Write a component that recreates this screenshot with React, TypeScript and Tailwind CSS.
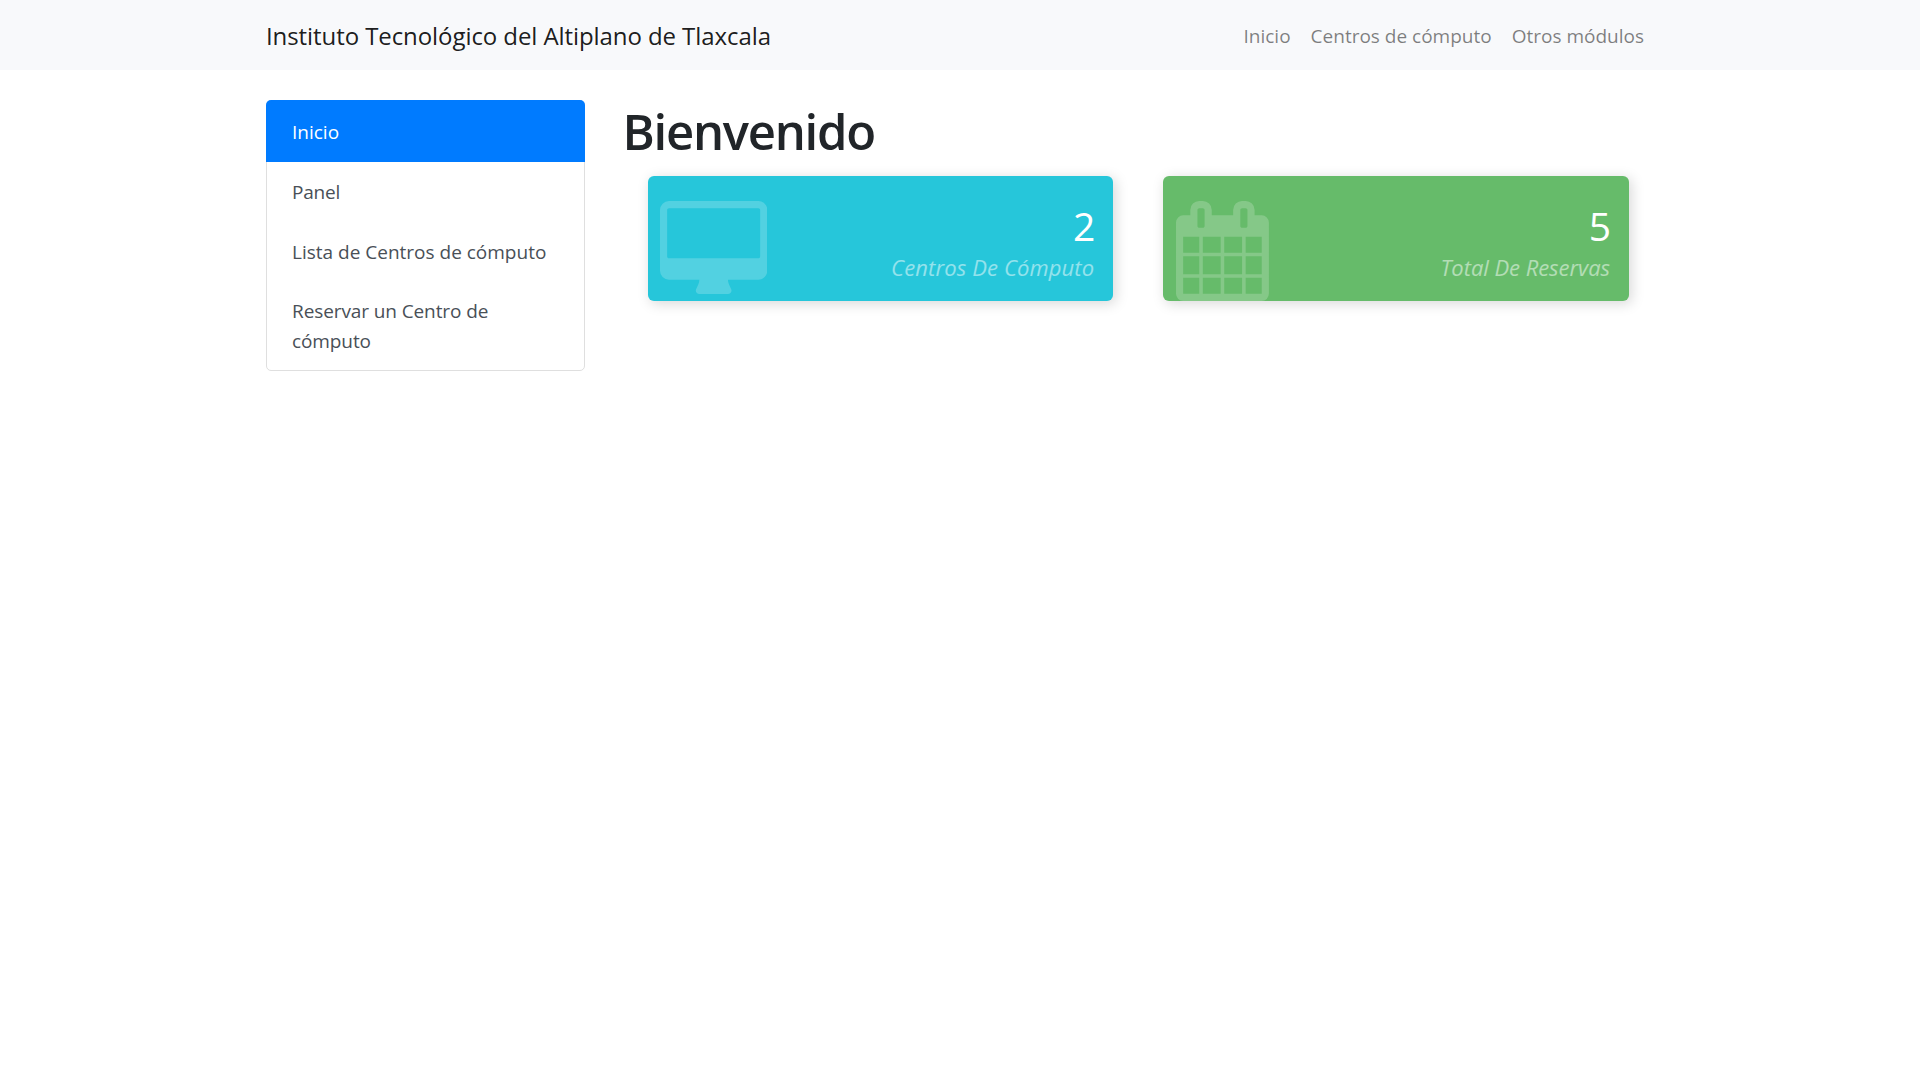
import React from "react";

const navLinks = ["Inicio", "Centros de cómputo", "Otros módulos"];

function DesktopIcon() {
  return (
    <svg viewBox="-64 0 1920 1664" className="block h-[93px] w-[107.3px] fill-white opacity-20">
      <path d="M1728 992v-832q0-13-9.5-22.5t-22.5-9.5h-1600q-13 0-22.5 9.5t-9.5 22.5v832q0 13 9.5 22.5t22.5 9.5h1600q13 0 22.5-9.5t9.5-22.5zm128-832v1088q0 66-47 113t-113 47h-544q0 37 16 77.5t32 71 16 43.5q0 26-19 45t-45 19h-512q-26 0-45-19t-19-45q0-14 16-44t32-70 16-78h-544q-66 0-113-47t-47-113v-1088q0-66 47-113t113-47h1600q66 0 113 47t47 113z" />
    </svg>
  );
}

function CalendarIcon() {
  return (
    <svg viewBox="64 0 1664 1792" className="block h-[100px] w-[92.9px] fill-white opacity-20">
      <path d="M192 1664h288v-288h-288v288zm352 0h320v-288h-320v288zm-352-352h288v-320h-288v320zm352 0h320v-320h-320v320zm-352-384h288v-288h-288v288zm736 736h320v-288h-320v288zm-384-736h320v-288h-320v288zm768 736h288v-288h-288v288zm-384-352h320v-320h-320v320zm-352-864v-288q0-13-9.5-22.5t-22.5-9.5h-64q-13 0-22.5 9.5t-9.5 22.5v288q0 13 9.5 22.5t22.5 9.5h64q13 0 22.5-9.5t9.5-22.5zm736 864h288v-320h-288v320zm-384-384h320v-288h-320v288zm384 0h288v-288h-288v288zm32-480v-288q0-13-9.5-22.5t-22.5-9.5h-64q-13 0-22.5 9.5t-9.5 22.5v288q0 13 9.5 22.5t22.5 9.5h64q13 0 22.5-9.5t9.5-22.5zm384-64v1280q0 52-38 90t-90 38h-1408q-52 0-90-38t-38-90v-1280q0-52 38-90t90-38h128v-96q0-66 47-113t113-47h64q66 0 113 47t47 113v96h384v-96q0-66 47-113t113-47h64q66 0 113 47t47 113v96h128q52 0 90 38t38 90z" />
    </svg>
  );
}

type CounterProps = {
  color: string;
  icon: React.ReactNode;
  count: number;
  label: string;
  labelClass: string;
};

function Counter({ color, icon, count, label, labelClass }: CounterProps) {
  return (
    <div
      className={`flex h-[125px] flex-1 justify-between rounded-[6px] pt-[25px] pl-[12.5px] text-white shadow-[2.5px_2.5px_12.5px_#dadada] ${color}`}
    >
      {icon}
      <div className="flex flex-col items-end pr-[19px] whitespace-nowrap">
        <span className="mt-[5px] text-[39px] leading-[40px] tracking-[-1px]">{count}</span>
        <span className={`mt-px text-[22px] leading-[40px] italic opacity-50 ${labelClass}`}>{label}</span>
      </div>
    </div>
  );
}

export default function App() {
  return (
    <div className="min-h-screen bg-white font-['Open_Sans',sans-serif] text-[19px] leading-[30px] text-[#212529]">
      <nav className="h-[70px] bg-[#f8f9fb]">
        <div className="mx-auto flex h-[72px] w-[1388px] items-center justify-between whitespace-nowrap">
          <a className="text-[24px] tracking-[-0.08px] text-black/90">
            Instituto Tecnológico del Altiplano de Tlaxcala
          </a>
          <div className="flex gap-5 pr-[10px] text-black/50">
            {navLinks.map((label) => (
              <a key={label}>{label}</a>
            ))}
          </div>
        </div>
      </nav>

      <div className="mx-auto flex w-[1388px] items-start pt-[30px]">
        <aside className="w-[319px] shrink-0 rounded-[5px] border border-[#dfdfdf] text-[#495057]">
          <a className="-mx-px -mt-px block h-[62px] rounded-t-[5px] bg-[#007bff] px-[26px] pt-[17px] text-white">
            Inicio
          </a>
          <a className="block h-[60px] px-[25px] pt-[15px] tracking-[-0.2px]">Panel</a>
          <a className="block h-[60px] px-[25px] pt-[15px] whitespace-nowrap">Lista de Centros de cómputo</a>
          <a className="block h-[88px] px-[25px] pt-[14px] tracking-[-0.1px] whitespace-nowrap">
            Reservar un Centro de
            <br />
            cómputo
          </a>
        </aside>

        <main className="flex-1 pl-[37px]">
          <h1 className="h-[76px] pt-px pl-[0.5px] text-[49px] leading-[60px] font-semibold tracking-[-1.25px]">
            Bienvenido
          </h1>
          <div className="flex gap-[50px] pr-[25px] pl-[25.5px]">
            <Counter
              color="bg-[#26c6da]"
              icon={<DesktopIcon />}
              count={2}
              label="Centros De Cómputo"
              labelClass="tracking-[0.12px]"
            />
            <Counter
              color="bg-[#66bb6a]"
              icon={<CalendarIcon />}
              count={5}
              label="Total De Reservas"
              labelClass="tracking-[-0.05px]"
            />
          </div>
        </main>
      </div>
    </div>
  );
}
